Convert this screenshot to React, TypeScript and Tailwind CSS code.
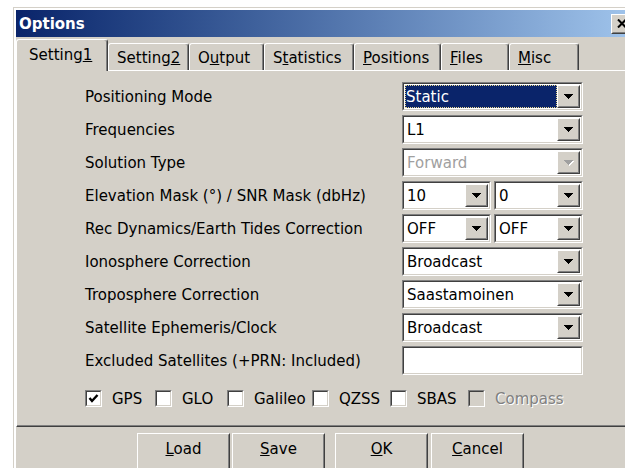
import type { ReactNode } from 'react';

// classic 3D edges
function Sunken({ className = '', innerClass = 'bg-white', children }: { className?: string; innerClass?: string; children?: ReactNode }) {
  return (
    <div className={`border border-t-[#808080] border-l-[#808080] border-r-white border-b-white ${className}`}>
      <div className={`h-full border border-t-[#404040] border-l-[#404040] border-r-[#d4d0c8] border-b-[#d4d0c8] ${innerClass}`}>
        {children}
      </div>
    </div>
  );
}

function Raised({ className = '', children }: { className?: string; children?: ReactNode }) {
  return (
    <div className={`border border-t-white border-l-white border-r-[#404040] border-b-[#404040] bg-[#d4d0c8] ${className}`}>
      <div className="h-full border border-t-[#d4d0c8] border-l-[#d4d0c8] border-r-[#808080] border-b-[#808080]">
        {children}
      </div>
    </div>
  );
}

function Arrow({ disabled }: { disabled?: boolean }) {
  return (
    <svg width="9" height="5" shapeRendering="crispEdges" className={disabled ? 'drop-shadow-[1px_1px_0_#fff]' : ''}>
      <path d="M0 0h9v1h-1v1h-1v1h-1v1h-1v1h-1v-1h-1v-1h-1v-1h-1v-1h-1z" fill={disabled ? '#a0a0a0' : '#000'} />
    </svg>
  );
}

function Combo({ value, width, selected, disabled }: { value: string; width: string; selected?: boolean; disabled?: boolean }) {
  return (
    <Sunken className={`h-[29px] ${width}`}>
      <div className="flex h-full p-px">
        <div className="flex flex-1 items-center">
          {selected ? (
            <div className="flex h-full w-full items-center bg-[#0a246a] pl-px text-white outline-1 outline-dotted outline-[#e4d48c] -outline-offset-1">
              {value}
            </div>
          ) : (
            <span className={`pl-[2px] ${disabled ? 'text-[#a0a0a0]' : ''}`}>{value}</span>
          )}
        </div>
        <Raised className="w-[23px]">
          <div className="flex h-full items-center justify-center">
            <Arrow disabled={disabled} />
          </div>
        </Raised>
      </div>
    </Sunken>
  );
}

function Row({ label, children }: { label: string; children: ReactNode }) {
  return (
    <div className="mb-[4px] flex h-[29px] items-center">
      <div className="w-[317px]">{label}</div>
      {children}
    </div>
  );
}

function Check({ label, checked, disabled, width }: { label: string; checked?: boolean; disabled?: boolean; width: string }) {
  return (
    <div className={`flex items-center ${width}`}>
      <Sunken className="h-[17px] w-[17px]" innerClass={disabled ? 'bg-[#d4d0c8]' : 'bg-white'}>
        {checked && (
          <svg viewBox="0 0 13 13" width="13" height="13">
            <polyline points="2.5,6 5,9 10.5,3" fill="none" stroke="#000" strokeWidth="2.4" />
          </svg>
        )}
      </Sunken>
      <span className={`ml-[10px] ${disabled ? 'text-[#808080] [text-shadow:1px_1px_0_#fff]' : ''}`}>{label}</span>
    </div>
  );
}

const tabs: { pre: string; key: string; post: string; w: string }[] = [
  { pre: 'Setting', key: '2', post: '', w: 'w-[81px]' },
  { pre: 'O', key: 'u', post: 'tput', w: 'w-[75px]' },
  { pre: 'S', key: 't', post: 'atistics', w: 'w-[90px]' },
  { pre: '', key: 'P', post: 'ositions', w: 'w-[87px]' },
  { pre: '', key: 'F', post: 'iles', w: 'w-[68px]' },
  { pre: '', key: 'M', post: 'isc', w: 'w-[70px]' },
];

function Btn({ pre = '', k, post, className }: { pre?: string; k: string; post: string; className: string }) {
  return (
    <Raised className={`h-[40px] w-[93px] ${className}`}>
      <div className="pt-[5px] text-center">
        {pre}
        <u>{k}</u>
        {post}
      </div>
    </Raised>
  );
}

export default function App() {
  return (
    <div className="h-[468px] w-[625px] overflow-hidden bg-white font-['DejaVu_Sans',sans-serif] text-[15px] leading-[18px] text-black">
      <div className="ml-[13px] mt-[7px] h-[480px] w-[640px] border-l border-t border-[#d4d0c8] bg-[#d4d0c8]">
        <div className="h-full border-l-2 border-t-2 border-white">
          {/* caption */}
          <div className="flex h-[27px] items-center bg-linear-to-r from-[#0a246a] to-[#a6caf0] pl-[3px]">
            <span className="font-bold text-white">Options</span>
            <Raised className="ml-auto mr-[20px] h-[20px] w-[22px]">
              <div className="flex h-full items-center justify-center">
                <svg width="10" height="9" viewBox="0 0 10 9">
                  <path d="M1 0.5l8 8M9 0.5l-8 8" stroke="#000" strokeWidth="2" />
                </svg>
              </div>
            </Raised>
          </div>

          {/* tab strip */}
          <div className="flex h-[33px] items-end">
            <div className="relative z-10 -mb-px h-[32px] w-[92px] rounded-t-[3px] border-l border-t border-white bg-[#d4d0c8] pl-[12px] pt-[6px] shadow-[inset_-1px_0_#808080] [border-right:1px_solid_#404040]">
              Setting<u>1</u>
            </div>
            {tabs.map((t) => (
              <div
                key={t.pre + t.key}
                className={`h-[27px] ${t.w} rounded-t-[3px] border-l border-r border-t border-l-white border-r-[#404040] border-t-white pl-[8px] pt-[5px] shadow-[inset_-1px_0_#808080]`}
              >
                {t.pre}
                <u>{t.key}</u>
                {t.post}
              </div>
            ))}
          </div>

          {/* page */}
          <div className="h-[357px] border-b border-l border-t border-b-[#404040] border-l-white border-t-white pl-[68px] pt-[11px] shadow-[inset_0_-1px_#808080]">
            <Row label="Positioning Mode">
              <Combo value="Static" width="w-[181px]" selected />
            </Row>
            <Row label="Frequencies">
              <Combo value="L1" width="w-[181px]" />
            </Row>
            <Row label="Solution Type">
              <Combo value="Forward" width="w-[181px]" disabled />
            </Row>
            <Row label="Elevation Mask (°) / SNR Mask (dbHz)">
              <div className="flex gap-[3px]">
                <Combo value="10" width="w-[89px]" />
                <Combo value="0" width="w-[89px]" />
              </div>
            </Row>
            <Row label="Rec Dynamics/Earth Tides Correction">
              <div className="flex gap-[3px]">
                <Combo value="OFF" width="w-[89px]" />
                <Combo value="OFF" width="w-[89px]" />
              </div>
            </Row>
            <Row label="Ionosphere Correction">
              <Combo value="Broadcast" width="w-[181px]" />
            </Row>
            <Row label="Troposphere Correction">
              <Combo value="Saastamoinen" width="w-[181px]" />
            </Row>
            <Row label="Satellite Ephemeris/Clock">
              <Combo value="Broadcast" width="w-[181px]" />
            </Row>
            <Row label="Excluded Satellites (+PRN: Included)">
              <Sunken className="h-[29px] w-[181px]" />
            </Row>

            <div className="mt-[15px] flex h-[17px]">
              <Check label="GPS" checked width="w-[70px]" />
              <Check label="GLO" width="w-[72px]" />
              <Check label="Galileo" width="w-[85px]" />
              <Check label="QZSS" width="w-[78px]" />
              <Check label="SBAS" width="w-[78px]" />
              <Check label="Compass" disabled width="w-[110px]" />
            </div>
          </div>

          {/* buttons */}
          <div className="mt-[6px] flex">
            <Btn k="L" post="oad" className="ml-[121px]" />
            <Btn k="S" post="ave" className="ml-[2px]" />
            <Btn k="O" post="K" className="ml-[10px]" />
            <Btn k="C" post="ancel" className="ml-[3px]" />
          </div>
        </div>
      </div>
    </div>
  );
}
